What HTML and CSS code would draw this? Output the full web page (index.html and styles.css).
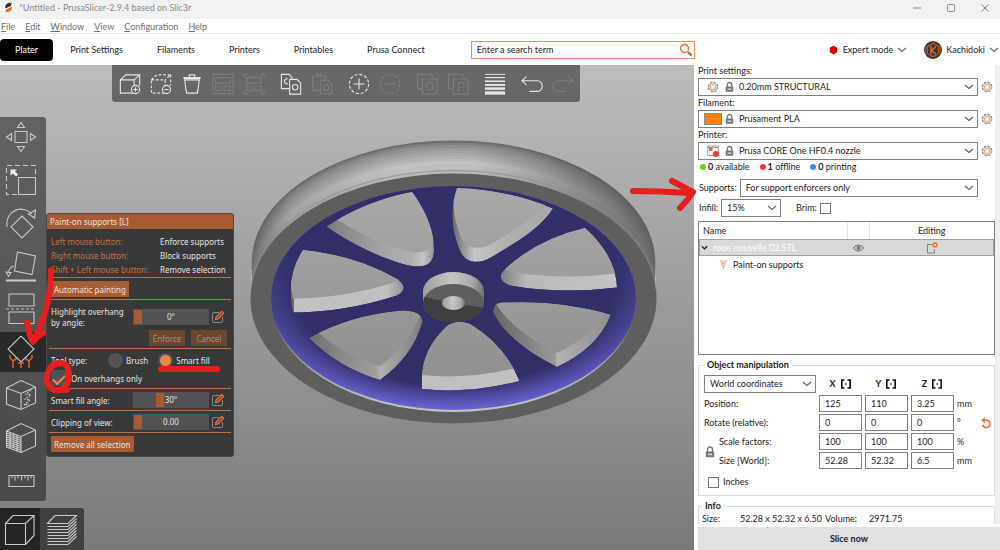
FILE: index.html
```html
<!DOCTYPE html>
<html lang="en">
<head>
<meta charset="utf-8">
<title>*Untitled - PrusaSlicer-2.9.4 based on Slic3r</title>
<link rel="stylesheet" href="styles.css">
</head>
<body>
<svg class="defs" width="0" height="0" aria-hidden="true">
  <symbol id="chev" viewBox="0 0 10 6"><path d="M1 1l4 3.4L9 1" fill="none" stroke="#666" stroke-width="1.3"/></symbol>
  <symbol id="gear" viewBox="0 0 12 12"><circle cx="6" cy="6" r="4.9" fill="none" stroke="#999" stroke-width="1.2" stroke-dasharray="2.2 1.650"/><circle cx="6" cy="6" r="4.2" fill="#fff" stroke="#888" stroke-width=".8"/><circle cx="6" cy="6" r="2.5" fill="none" stroke="#f0a57f" stroke-width="1.200"/></symbol>
  <symbol id="lock" viewBox="0 0 10 12"><path d="M2.5 6V3.5a2.5 2.500 0 0 1 5 0V6" fill="none" stroke="#777" stroke-width="1.4"/><rect x=".8" y="5.4" width="8.4" height="5.8" rx=".8" fill="#777"/><rect x="3" y="7.6" width="4" height="1.6" fill="#ddd"/></symbol>
  <symbol id="mirror" viewBox="0 0 12 10"><path d="M4.500 1H1.800v8H4.500M7.500 1h2.700v8H7.500" fill="none" stroke="#111" stroke-width="1.600"/><path d="M6 4v2" stroke="#111" stroke-width="1"/></symbol>
  <symbol id="edit" viewBox="0 0 14 14"><path d="M8 2.500H3a1.500 1.500 0 0 0-1.500 1.500v7A1.500 1.500 0 0 0 3 12.500h7a1.500 1.500 0 0 0 1.500-1.500V7" fill="none" stroke="#8a8a8a" stroke-width="1"/><path d="M4.500 9.500l.6-2.700L10.700 1.300l2 2L7.200 8.900z" fill="#8a4a28" stroke="#e07038" stroke-width="1.200"/></symbol>
</svg>

<div class="app">
  <header class="titlebar">
    <svg class="logo" viewBox="0 0 12 12"><circle cx="6" cy="6" r="6" fill="#fff"/><path d="M2.500 7C1.800 2.500 5 .4 9.500 1L8.700 4.300z" fill="#333"/><path d="M9.800 4.800C10.500 8.500 7.500 11.700 2.500 11L3.200 8.200z" fill="#ed6b21"/></svg>
    <span class="title">*Untitled - PrusaSlicer-2.9.4 based on Slic3r</span>
    <div class="winbtns">
      <button aria-label="Minimize"><svg viewBox="0 0 8 8"><path d="M0 4h8"/></svg></button>
      <button aria-label="Maximize"><svg viewBox="0 0 8 8"><rect x=".5" y=".5" width="7" height="7" rx="1"/></svg></button>
      <button aria-label="Close"><svg viewBox="0 0 8 8"><path d="M.5.5l7 7M7.500.5l-7 7"/></svg></button>
    </div>
  </header>
  <nav class="menubar">
    <button><u>F</u>ile</button><button><u>E</u>dit</button><button><u>W</u>indow</button><button><u>V</u>iew</button><button><u>C</u>onfiguration</button><button><u>H</u>elp</button>
  </nav>
  <nav class="tabs">
    <button class="tab active">Plater</button>
    <button class="tab">Print Settings</button>
    <button class="tab">Filaments</button>
    <button class="tab">Printers</button>
    <button class="tab">Printables</button>
    <button class="tab">Prusa Connect</button>
    <label class="search">
      <input type="text" aria-label="Search" value="Enter a search term">
      <svg viewBox="0 0 14 14"><circle cx="5.500" cy="5.500" r="4" fill="none" stroke="#ed6b21" stroke-width="1.300"/><path d="M9 9l3.500 3.500" stroke="#777" stroke-width="2.400"/></svg>
    </label>
    <div class="account">
      <button class="mode"><svg class="hex" viewBox="0 0 10 12"><path d="M5 .5l4.500 2.700v5.600L5 11.500.5 8.800V3.200z" fill="#e70000"/></svg>Expert mode<svg class="chev"><use href="#chev"/></svg></button>
      <button class="user"><svg class="avatar" viewBox="0 0 18 18"><circle cx="9" cy="9" r="9" fill="#3a3432"/><path d="M9 2.200l5.800 3.400v6.800L9 15.800l-5.800-3.400V5.600z" fill="none" stroke="#c95a26" stroke-width="1.200"/><path d="M7 5v8M12 5.500L7.500 9.300 11.800 13" fill="none" stroke="#e0662c" stroke-width="1.600"/><path d="M1.500 5v8M16.500 5v8" stroke="#a34a22" stroke-width="1"/></svg>Kachidoki<svg class="chev"><use href="#chev"/></svg></button>
    </div>
  </nav>

  <div class="main">
    <main class="viewport">
      <svg class="scene" viewBox="0 65 694 485" preserveAspectRatio="xMidYMid slice" role="img" aria-label="Wheel model">
        <defs>
          <linearGradient id="bg" gradientUnits="userSpaceOnUse" x1="0" y1="65" x2="0" y2="550"><stop offset="0" stop-color="#bcbcbc"/><stop offset="1" stop-color="#7a7a7a"/></linearGradient>
          <linearGradient id="side" gradientUnits="userSpaceOnUse" x1="250" y1="0" x2="657" y2="0"><stop offset="0" stop-color="#555" stop-opacity=".75"/><stop offset=".1" stop-color="#606060" stop-opacity=".3"/><stop offset=".35" stop-color="#666" stop-opacity="0"/><stop offset=".55" stop-color="#666" stop-opacity="0"/><stop offset=".8" stop-color="#5a5a5a" stop-opacity=".5"/><stop offset="1" stop-color="#555" stop-opacity=".8"/></linearGradient>
          <radialGradient id="barrel" cx=".5" cy=".5" r=".5" fx=".5" fy=".09"><stop offset=".88" stop-color="#322f68"/><stop offset=".93" stop-color="#4d4a9e"/><stop offset="1" stop-color="#6965d8"/></radialGradient>
          <linearGradient id="shade" x1="0" y1="0" x2="0" y2="1"><stop offset=".3" stop-color="#322f68"/><stop offset=".6" stop-color="#322f68" stop-opacity=".62"/><stop offset="1" stop-color="#322f68" stop-opacity="0"/></linearGradient>
          <linearGradient id="lip" x1="0" y1="0" x2="0" y2="1"><stop offset=".6" stop-color="#5e5e5e"/><stop offset=".8" stop-color="#aaa"/><stop offset="1" stop-color="#c4c4c4"/></linearGradient>
          <linearGradient id="wUp"><stop offset="0" stop-color="#7c7c7c"/><stop offset=".5" stop-color="#a4a4a4"/><stop offset=".8" stop-color="#b0b0b0"/><stop offset=".9" stop-color="#c6c6c6"/><stop offset="1" stop-color="#949494"/></linearGradient>
          <linearGradient id="wUpR"><stop offset="0" stop-color="#686868"/><stop offset=".12" stop-color="#9a9a9a"/><stop offset=".22" stop-color="#c6c6c6"/><stop offset=".5" stop-color="#b2b2b2"/><stop offset="1" stop-color="#a6a6a6"/></linearGradient>
          <linearGradient id="wFlatR"><stop offset="0" stop-color="#7e7e7e"/><stop offset=".22" stop-color="#b8b8b8"/><stop offset="1" stop-color="#c4c4c4"/></linearGradient>
          <linearGradient id="wDnR"><stop offset="0" stop-color="#666"/><stop offset=".53" stop-color="#989898"/><stop offset=".54" stop-color="#b4b4b4"/><stop offset="1" stop-color="#8c8c8c"/></linearGradient>
          <linearGradient id="wDnL"><stop offset="0" stop-color="#707070"/><stop offset=".6" stop-color="#a0a0a0"/><stop offset=".63" stop-color="#b0b0b0"/><stop offset="1" stop-color="#7c7c7c"/></linearGradient>
          <linearGradient id="wFlatL"><stop offset="0" stop-color="#686868"/><stop offset=".03" stop-color="#686868"/><stop offset=".035" stop-color="#c2c2c2"/><stop offset=".85" stop-color="#c0c0c0"/><stop offset="1" stop-color="#909090"/></linearGradient>
          <linearGradient id="hub"><stop offset="0" stop-color="#9c9c9c"/><stop offset=".45" stop-color="#c6c6c6"/><stop offset=".8" stop-color="#aaa"/><stop offset="1" stop-color="#707070"/></linearGradient>
          <path id="hA" d="M326.500 226.500Q365 201 412 192Q434 222 434 250C434 262 428 266.500 417 266.500C400 266 358 249 326.500 226.500Z"/>
          <path id="hB" d="M457 188Q510 190 553 208.500C540 229 514 244 490 258C477 265 466 262 461 253Q446 221 457 188Z"/>
          <path id="hC" d="M585 228Q616 256 617 287.500Q560 294.500 510 285.500C500 282 498 276 504 270Q537 239 585 228Z"/>
          <path id="hD" d="M493 312C494 303 498 302.500 505 302.500Q560 300 611 314.500Q598 348 557 367Q507 342 493 312Z"/>
          <path id="hE" d="M422 389C420 362 429 343 447 326Q457 319 470 324Q505 345 519.500 381Q470 394 422 389Z"/>
          <path id="hF" d="M309 338Q351 315 400 311C414 310 424 315 422 323Q413 356 380 380Q339 368 309 338Z"/>
          <path id="hG" d="M303 250Q355 255 397 279C406 285 406 291 397 295.500Q346 312 293 312.500Q285 278 303 250Z"/>
          <clipPath id="cA"><use href="#hA"/></clipPath><clipPath id="cB"><use href="#hB"/></clipPath><clipPath id="cC"><use href="#hC"/></clipPath><clipPath id="cD"><use href="#hD"/></clipPath><clipPath id="cE"><use href="#hE"/></clipPath><clipPath id="cF"><use href="#hF"/></clipPath><clipPath id="cG"><use href="#hG"/></clipPath>
          <clipPath id="cFace"><ellipse cx="453.500" cy="303" rx="30.500" ry="19"/></clipPath>
        </defs>
        <rect x="-1000" y="-500" width="3000" height="2000" fill="url(#bg)"/>
        <g>
          <ellipse cx="453.500" cy="262" rx="201.500" ry="121.500" fill="#6e6e6e"/>
          <ellipse cx="453.500" cy="264.500" rx="202" ry="122" fill="#808080"/>
          <ellipse cx="453.500" cy="267" rx="202" ry="122" fill="#8f8f8f"/>
          <ellipse cx="453.500" cy="270" rx="202" ry="122" fill="#999"/>
          <ellipse cx="453.500" cy="273" rx="202" ry="122.500" fill="#a2a2a2"/>
          <ellipse cx="453.500" cy="276" rx="202" ry="123" fill="#aaa"/>
          <ellipse cx="453.500" cy="279" rx="202" ry="123" fill="#b2b2b2"/>
          <ellipse cx="453.500" cy="282" rx="202" ry="123" fill="#bababa"/>
          <ellipse cx="453.500" cy="285" rx="202" ry="124" fill="#c3c3c3"/>
          <ellipse cx="453.500" cy="289" rx="202" ry="124" fill="#bfbfbf"/>
          <ellipse cx="453.500" cy="293" rx="202" ry="124" fill="#b9b9b9"/>
          <path d="M252 262a201.500 121.500 0 0 1 403 0v36h-403z" fill="url(#side)"/>
        </g>
        <ellipse cx="453.500" cy="298.500" rx="203" ry="125" fill="#5e5e5e"/>
        <path d="M250.700 290A203 125 0 0 1 656.300 290" fill="none" stroke="#8f8f8f" stroke-width=".8"/>
        <ellipse cx="453.500" cy="299" rx="183" ry="113" fill="url(#lip)"/>
        <ellipse cx="453.500" cy="298" rx="182.500" ry="112" fill="url(#barrel)"/>
        <ellipse cx="453.500" cy="298" rx="182.500" ry="112" fill="url(#shade)"/>
        <g clip-path="url(#cA)"><use href="#hA" fill="url(#wUp)"/><use href="#hA" y="-14" fill="url(#bg)"/></g>
        <g clip-path="url(#cB)"><use href="#hB" fill="url(#wUpR)"/><use href="#hB" x="1" y="-14" fill="url(#bg)"/></g>
        <g clip-path="url(#cC)"><use href="#hC" fill="url(#wFlatR)"/><use href="#hC" y="-14" fill="url(#bg)"/></g>
        <g clip-path="url(#cD)"><use href="#hD" fill="url(#wDnR)"/><use href="#hD" y="-14" fill="url(#bg)"/></g>
        <g clip-path="url(#cE)"><use href="#hE" fill="#c0c0c0"/><use href="#hE" y="-14" fill="url(#bg)"/></g>
        <g clip-path="url(#cF)"><use href="#hF" fill="url(#wDnL)"/><use href="#hF" y="-14" fill="url(#bg)"/></g>
        <g clip-path="url(#cG)"><use href="#hG" fill="url(#wFlatL)"/><use href="#hG" y="-14" fill="url(#bg)"/></g>
        <path d="M423 291a30.500 19 0 0 1 61 0v12h-61z" fill="url(#hub)"/>
        <ellipse cx="453.500" cy="303" rx="30.500" ry="19" fill="#5e5e5e"/>
        <path clip-path="url(#cFace)" d="M420 296L453 303 486 308V325H420z" fill="#3f3f3f"/>
        <ellipse cx="453.500" cy="303" rx="11.500" ry="7" fill="url(#hub)"/>
      </svg>

      <div class="toolbar">
        <div class="group">
          <button aria-label="Add"><svg viewBox="0 0 24 24"><path d="M1.500 7.500h15V22h-15zM1.500 7.500L7.500 2h15l-6 5.500M22.500 2v12"/><circle cx="18" cy="18" r="4.500" class="solid"/><path d="M15.500 18h5M18 15.500v5"/></svg></button>
          <button aria-label="Delete"><svg viewBox="0 0 24 24"><path d="M1.500 7.500h15V22h-15zM1.500 7.500L7.500 2h15l-6 5.500M22.500 2v12" stroke-dasharray="3 2"/><circle cx="18" cy="18" r="4.500" class="solid"/><path d="M15.500 18h5"/></svg></button>
          <button aria-label="Delete all"><svg viewBox="0 0 24 24"><path d="M2.500 5h19M4 7.500l2 14.500h12l2-14.500zM9 4.500V2h6v2.500"/><path d="M3 6h18" /></svg></button>
          <button aria-label="Arrange" disabled><svg viewBox="0 0 24 24"><path d="M1 1.500h22v21H1zM4 5h16v6H4zM4 14.500h6v5H4zM13 14.500h7v5h-7z"/></svg></button>
          <button aria-label="Arrange selection" disabled><svg viewBox="0 0 24 24"><path d="M1 5V1.500h4M19 1.500h4V5M23 19v3.500h-4M5 22.500H1V19M4 5h16v6H4zM4 14.500h6v5H4zM13 14.500h7v5h-7z"/></svg></button>
        </div>
        <div class="group">
          <button aria-label="Copy"><svg viewBox="0 0 24 24"><path d="M10 17H1.500V1.500H10L13 4.500V6"/><path d="M8.500 6.500a2.700 2.700 0 1 0 0 5"/><path d="M10.500 7h8l4 4v12h-12z" class="solid"/><circle cx="16.500" cy="15.500" r="3"/></svg></button>
          <button aria-label="Paste" disabled><svg viewBox="0 0 24 24"><path d="M10 19H2V3.500h14V7M6 3.500V1.500h6v2M10.500 8h8l4 4v10.500h-12z"/><circle cx="16.500" cy="16" r="3"/></svg></button>
        </div>
        <div class="group">
          <button aria-label="Add instance"><svg viewBox="0 0 24 24"><circle cx="12" cy="12" r="10.500" stroke-dasharray="3.500 2"/><path d="M6 12h12M12 6v12"/></svg></button>
          <button aria-label="Remove instance" disabled><svg viewBox="0 0 24 24"><circle cx="12" cy="12" r="10.500" stroke-dasharray="3.500 2"/><path d="M6 12h12"/></svg></button>
        </div>
        <div class="group">
          <button aria-label="Split to objects" disabled><svg viewBox="0 0 24 24"><path d="M7 17H1.500V1.500h16V6M7 6.500h16V23H7zM13 10.500h4l1 1v6l-1 1h-4l-1-1v-6z"/></svg></button>
          <button aria-label="Split to parts" disabled><svg viewBox="0 0 24 24"><path d="M7 17H1.500V1.500h16V6M7 6.500h16V23H7zM12.500 19.500v-9H17l1.500 1.500v2L17 15.500h-4.500"/></svg></button>
        </div>
        <div class="group">
          <button aria-label="Variable layer height"><svg viewBox="0 0 24 24"><path d="M1 1.500h22" stroke-width="1"/><path d="M1 5h22" stroke-width="1.300"/><path d="M1 9h22" stroke-width="1.800"/><path d="M1 13h22" stroke-width="2.200"/><path d="M1 17h22" stroke-width="2.700"/><path d="M1 21.800h22" stroke-width="3.500"/></svg></button>
        </div>
        <div class="group">
          <button aria-label="Undo"><svg viewBox="0 0 24 24"><path d="M6 4L1 8.500 6 13M1.500 8.500H18a5 5.500 0 0 1 0 11.500H9"/></svg></button>
          <button aria-label="Redo" disabled><svg viewBox="0 0 24 24"><path d="M18 4l5 4.500L18 13M22.500 8.500H6A5 5.500 0 0 0 6 20h9"/></svg></button>
        </div>
      </div>

      <div class="gizmos">
        <button aria-label="Move"><svg viewBox="0 0 32 32"><path d="M10 10.500h12v11H10zM16 1.500l3.500 5h-7zM16 30.500l3.500-5h-7zM1.500 16l5-3.500v7zM30.500 16l-5-3.500v7z"/></svg></button>
        <button aria-label="Scale"><svg viewBox="0 0 32 32"><path d="M13.500 13.500h17v17h-17z"/><path d="M12 30.500H1.500v-29h29V12" stroke-dasharray="5 3"/><path d="M5.500 5.500h6.500l-2 2 3 3-2 2-3-3-2.500 2z" fill="#eee" stroke="none"/></svg></button>
        <button aria-label="Rotate"><svg viewBox="0 0 32 32"><path d="M17 9l11 11-11 11L6 20zM2 20C0 3 18-3 27 7M30.500 3l-1 8-6-4z"/></svg></button>
        <button aria-label="Place on face"><svg viewBox="0 0 32 32"><path d="M12.500 2L30.500 6 27 24.500 9.500 21zM9 16Q4 17 3.500 23M1 22l5 .5-2.500 4z"/><path d="M1 30.500h30" stroke-width="2"/></svg></button>
        <button aria-label="Cut"><svg viewBox="0 0 32 32"><path d="M4 1h25v12H4zM4 19h25v11.500H4z"/><path d="M1 16h30" stroke-dasharray="3 2"/></svg></button>
        <button aria-label="Paint-on supports" class="on"><svg viewBox="0 0 32 32"><path d="M8 32v-7l-3-3v-3M8 25l3-2v-3M16 32v-5M13 27h6M24 32v-7l-3-2v-3M24 25l3-3v-3" class="orange"/><path d="M16 0l13 13-13 13L3 13z" class="face"/></svg></button>
        <button aria-label="Seam painting"><svg viewBox="0 0 32 32"><path d="M1.500 9L16 1.500 30.500 8v16L16 30.500 1.500 25zM1.500 9L16 14.500 30.500 8M16 14.500v16"/><path d="M26 11l-5 4 5 1-6 4 5 1-6 5 5-1" stroke-dasharray="2 1"/></svg></button>
        <button aria-label="Multimaterial painting"><svg viewBox="0 0 32 32"><path d="M1.500 9L16 1.500 30.500 8v16L16 30.500 1.500 25zM1.500 9L16 14.500 30.500 8M16 14.500v16M1.500 11l14.500 5.500M1.500 13L16 18.500M1.500 15L16 20.500M1.500 17L16 22.500M1.500 19L16 24.500M1.500 21L16 26.500M1.500 23L16 28.500M5 10v16M8.500 11.500v16M12 13v16"/></svg></button>
        <button aria-label="Measure"><svg viewBox="0 0 32 32"><path d="M4 10.500h25v11H4zM7 10.500v3M10 10.500v5M13 10.500v3M16.500 10.500v5M20 10.500v3M23 10.500v5M26 10.500v3"/></svg></button>
      </div>

      <div class="views">
        <button aria-label="3D editor view" class="on"><svg viewBox="0 0 32 32"><path d="M1.500 9.500h20v21h-20zM1.500 9.500L9 1.500h21l-8.500 8M30 1.500v20l-8.500 9"/></svg></button>
        <button aria-label="Preview"><svg viewBox="0 0 32 32"><path d="M1.500 9.500L9 1.500h21.500l-8.500 8zM1.500 12.500H22l8.500-8M1.500 15.500H22l8.500-8M1.500 18.500H22l8.500-8M1.500 21.500H22l8.500-8M1.500 24.500H22l8.500-8M1.500 27.500H22l8.500-8M1.500 30.500H22l8.500-8"/></svg></button>
      </div>

      <section class="panel">
        <h2>Paint-on supports [L]</h2>
        <div class="pbody">
          <dl class="keys">
            <dt>Left mouse button:</dt><dd>Enforce supports</dd>
            <dt>Right mouse button:</dt><dd>Block supports</dd>
            <dt>Shift + Left mouse button:</dt><dd>Remove selection</dd>
          </dl>
          <div class="sect"><button class="pbtn">Automatic painting</button></div>
          <div class="sect">
            <div class="prow tall"><label for="hl">Highlight overhang by angle:</label><span class="slider"><input id="hl" type="range" min="0" max="90" value="0"><output>0°</output></span><button class="edit" aria-label="Edit angle"><svg><use href="#edit"/></svg></button></div>
            <div class="actions"><button class="pbtn" disabled>Enforce</button><button class="pbtn" disabled>Cancel</button></div>
          </div>
          <div class="sect stack">
            <div class="tools"><span>Tool type:</span><label><input type="radio" name="tool">Brush</label><label><input type="radio" name="tool" checked>Smart fill</label></div>
            <label class="over"><input type="checkbox" checked>On overhangs only</label>
          </div>
          <div class="sect"><div class="prow"><label for="sf">Smart fill angle:</label><span class="slider"><input id="sf" type="range" min="0" max="90" value="30"><output>30°</output></span><button class="edit" aria-label="Edit fill angle"><svg><use href="#edit"/></svg></button></div></div>
          <div class="sect"><div class="prow"><label for="cv">Clipping of view:</label><span class="slider"><input id="cv" type="range" min="0" max="1" step=".01" value="0"><output>0.00</output></span><button class="edit" aria-label="Edit clipping"><svg><use href="#edit"/></svg></button></div></div>
          <div class="sect"><button class="pbtn">Remove all selection</button></div>
        </div>
      </section>

      <svg class="marks left" viewBox="0 65 240 485" aria-hidden="true"><path d="M51 270C51 296 46 314 34 341M27 322Q29 335 33 342Q37 336 43 333"/><path d="M58 363C45 365 43 386 54 390C63 392 70 384 69 373C68 362 60 361 51 367M56 390L67 390"/><path d="M161 369H217"/></svg>
      <svg class="marks right" viewBox="624 65 70 485" aria-hidden="true"><path d="M633 191Q660 191 688 193M672 181L693 192Q688 200 680 208"/></svg>
    </main>

    <aside class="sidebar">
      <div class="scroll">
        <div class="presets">
          <label for="ps">Print settings:</label>
          <div class="line"><div class="combo two"><select id="ps"><option>0.20mm STRUCTURAL</option></select><span class="icons"><svg class="i12"><use href="#gear"/></svg><svg class="lk"><use href="#lock"/></svg></span><svg class="chev"><use href="#chev"/></svg></div><button class="cog" aria-label="Edit print settings"><svg><use href="#gear"/></svg></button></div>
          <label for="fl">Filament:</label>
          <div class="line"><div class="combo two"><select id="fl"><option>Prusament PLA</option></select><span class="icons"><i class="swatch"></i><svg class="lk"><use href="#lock"/></svg></span><svg class="chev"><use href="#chev"/></svg></div><button class="cog" aria-label="Edit filament"><svg><use href="#gear"/></svg></button></div>
          <label for="pr">Printer:</label>
          <div class="line"><div class="combo two"><select id="pr"><option>Prusa CORE One HF0.4 nozzle</option></select><span class="icons"><svg class="i12" viewBox="0 0 12 12"><path d="M.7 1h10.600v9.500H.7zM.7 2.500h10.600" fill="none" stroke="#999" stroke-width="1"/><rect x="2" y="3" width="3.500" height="3" fill="#ed6b21"/><circle cx="8.800" cy="9" r="3" fill="#f33"/></svg><svg class="lk"><use href="#lock"/></svg></span><svg class="chev"><use href="#chev"/></svg></div><button class="cog" aria-label="Edit printer"><svg><use href="#gear"/></svg></button></div>
        </div>
        <div class="status"><span><i class="dot green"></i><b>0</b> available</span><span><i class="dot red"></i><b>1</b> offline</span><span><i class="dot blue"></i><b>0</b> printing</span></div>
        <div class="line supports"><label for="su">Supports:</label><div class="combo"><select id="su"><option>For support enforcers only</option></select><svg class="chev"><use href="#chev"/></svg></div></div>
        <div class="line infill"><label for="inf">Infill:</label><div class="combo small"><select id="inf"><option>15%</option></select><svg class="chev"><use href="#chev"/></svg></div><label for="brim" class="brim">Brim:</label><input id="brim" type="checkbox" class="box"></div>
        <div class="tree">
          <table>
            <colgroup><col><col class="c2"><col class="c3"></colgroup>
            <thead><tr><th>Name</th><th></th><th>Editing</th></tr></thead>
            <tbody>
              <tr class="sel"><td><span class="cell"><svg class="arrow" viewBox="0 0 8 6"><path d="M1 1l3 3 3-3" fill="none" stroke="#222" stroke-width="1.500"/></svg>roue nouvelle 02.STL</span></td><td><svg class="eye" viewBox="0 0 12 8"><path d="M.5 4Q6-2.500 11.500 4Q6 10.500.5 4z" fill="none" stroke="#777" stroke-width="1.200"/><circle cx="6" cy="4" r="2.200" fill="#777"/></svg></td><td><svg class="ed" viewBox="0 0 12 12"><path d="M6 2.500H1.500v8.500h7V7" fill="none" stroke="#777" stroke-width=".9"/><circle cx="9" cy="3" r="2" fill="none" stroke="#ed6b21" stroke-width="1.400"/></svg></td></tr>
              <tr><td><span class="cell child"><svg class="pos" viewBox="0 0 10 12"><path d="M1 1l2 3h4l2-3M3 5l2 5.500L7 5z" fill="#fbd9c8" stroke="#e9a58a" stroke-width="1"/></svg>Paint-on supports</span></td><td></td><td></td></tr>
            </tbody>
          </table>
        </div>
        <fieldset class="manip">
          <legend>Object manipulation</legend>
          <div class="grid">
            <div class="combo world"><select aria-label="Coordinate system"><option>World coordinates</option></select><svg class="chev"><use href="#chev"/></svg></div>
            <b class="axis">X <svg><use href="#mirror"/></svg></b><b class="axis">Y <svg><use href="#mirror"/></svg></b><b class="axis">Z <svg><use href="#mirror"/></svg></b><span></span><span></span>
            <span>Position:</span><input type="text" aria-label="Position X" value="125"><input type="text" aria-label="Position Y" value="110"><input type="text" aria-label="Position Z" value="3.25"><span>mm</span><span></span>
            <span>Rotate (relative):</span><input type="text" aria-label="Rotate X" value="0"><input type="text" aria-label="Rotate Y" value="0"><input type="text" aria-label="Rotate Z" value="0"><span>°</span><button class="reset" aria-label="Reset rotation"><svg viewBox="0 0 12 12"><path d="M3 3.200h3.500a3.700 3.700 0 1 1-3.800 4.600" fill="none" stroke="#ed6b21" stroke-width="1.500"/><path d="M4.800 0L1.300 3.200l3.500 3z" fill="#ed6b21"/></svg></button>
            <span class="sub">Scale factors:</span><input type="text" aria-label="Scale X" value="100"><input type="text" aria-label="Scale Y" value="100"><input type="text" aria-label="Scale Z" value="100"><span>%</span><span></span>
            <span class="sub">Size [World]:</span><input type="text" aria-label="Size X" value="52.28"><input type="text" aria-label="Size Y" value="52.32"><input type="text" aria-label="Size Z" value="6.5"><span>mm</span><span></span>
            <button class="uniform" aria-label="Lock proportions"><svg><use href="#lock"/></svg></button>
          </div>
          <label class="inches"><input type="checkbox" class="box">Inches</label>
        </fieldset>
        <fieldset class="info">
          <legend>Info</legend>
          <div class="facts"><span>Size:</span><span>52.28 x 52.32 x 6.50</span><span>Volume:</span><span>2971.75</span></div>
        </fieldset>
      </div>
      <button class="slice">Slice now</button>
    </aside>
  </div>
</div>
</body>
</html>
```
FILE: styles.css
```css
* { box-sizing: border-box; }
body { margin: 0; font: 9px/12px Lato, "Noto Sans", sans-serif; color: #1c1c1c; background: #fff; }
button, input, select { font: inherit; color: inherit; margin: 0; }
button { border: 0; background: none; padding: 0; }
svg { display: block; flex: none; }
.defs { position: absolute; }
.app { height: 100vh; min-height: 550px; display: flex; flex-direction: column; }
.chev { width: 10px; height: 6px; }

.titlebar { height: 19px; background: #f2f2f2; color: #8c8c8c; display: flex; align-items: center; padding: 0 11px 4px 3px; }
.logo { width: 11px; height: 11px; margin-right: 5px; }
.winbtns { margin-left: auto; display: flex; gap: 26px; }
.winbtns svg { width: 8px; height: 8px; fill: none; stroke: #8a8a8a; }
.menubar { height: 15px; display: flex; gap: 10px; padding: 1px 1px 0; color: #6e6e6e; border-bottom: 1px solid #eaeaea; }

.tabs { height: 31px; display: flex; align-items: center; }
.tab { padding: 0 17px; height: 22px; white-space: nowrap; }
.tab.active { background: #000; color: #fff; border-radius: 4px; padding: 0 15px; }
.search { flex: 1 1 224px; max-width: 224px; margin-left: 29px; height: 18px; border: 1px solid #ed8b5a; display: flex; align-items: center; padding: 0 1px 0 5px; }
.search input { flex: 1; min-width: 0; border: 0; outline: 0; padding: 0; background: none; }
.search svg { width: 14px; height: 14px; }
.account { margin-left: auto; display: flex; gap: 17px; padding-right: 1px; }
.account button { display: flex; align-items: center; }
.hex { width: 9px; height: 10px; margin-right: 5px; }
.avatar { width: 18px; height: 18px; margin-right: 4px; }
.account .chev { margin-left: 4px; }

.main { flex: 1; min-height: 0; display: flex; }
.viewport { flex: 1; min-width: 0; position: relative; background: #999; z-index: 1; }
.scene { position: absolute; inset: 0; width: 100%; height: 100%; }

.toolbar { position: absolute; top: 0; left: 112px; height: 37px; display: flex; gap: 6px; padding: 0 2px; background: rgba(88, 88, 88, .85); border-radius: 0 0 3px 3px; }
.group { display: flex; }
.toolbar button { width: 31px; display: grid; place-items: center; }
.toolbar svg { width: 22px; height: 22px; fill: none; stroke: #e6e6e6; stroke-width: 1.2; }
.toolbar .solid { fill: #666; }
.toolbar button:disabled { opacity: .17; }

.gizmos { position: absolute; top: 52px; left: 0; width: 46px; display: flex; flex-direction: column; gap: 3px; background: linear-gradient(#626262, #484848); border-radius: 0 3px 3px 0; }
.gizmos button { height: 40px; padding-left: 5px; }
.gizmos svg, .views svg { width: 32px; height: 32px; fill: none; stroke: #c8c8c8; stroke-width: 1.1; }
.gizmos .on { background: #292929; }
.gizmos .orange { stroke: #d0622a; stroke-width: 1.6; }
.gizmos .face { fill: #292929; }
.views { position: absolute; left: 0; bottom: 0; height: 42px; display: flex; background: #404040; border-radius: 0 3px 0 0; overflow: hidden; }
.views button { width: 44px; padding: 2px 5px 0 6px; }
.views .on { width: 40px; padding: 2px 4px 0; background: #242424; }

.panel { position: absolute; left: 46px; top: 148px; width: 188px; background: #383838; color: #e4e4e4; border: 1px solid #484848; border-radius: 3px; overflow: hidden; font: 8px/11px "Noto Sans", sans-serif; }
.panel h2 { margin: 0; padding: 0 3px; font-size: 8px; font-weight: 400; line-height: 15px; background: #a85a30; }
.pbody { padding: 6px 2px 2px; }
.keys { margin: 0; padding: 0 2px; display: grid; grid-template-columns: 109px 1fr; line-height: 14px; }
.keys dt { color: #c4703f; white-space: nowrap; }
.keys dd { margin: 0; white-space: nowrap; }
.sect { border-top: 1px solid #c07040; padding: 3px 2px 2px; }
.pbtn { height: 16px; padding: 0 3px; background: #a85a30; display: block; }
.pbtn:disabled { background: #6b4631; color: #a08f86; }
.prow { display: grid; grid-template-columns: 80px 76px 12px; column-gap: 2px; align-items: center; min-height: 16px; }
.tall { padding-top: 3px; }
.slider { position: relative; display: block; height: 16px; }
.slider input { appearance: none; width: 100%; height: 16px; background: #525252; padding: 0 1px; display: block; }
.slider input::-webkit-slider-thumb { appearance: none; width: 8px; height: 14px; background: #a85a30; }
.slider output { position: absolute; inset: 0; text-align: center; line-height: 16px; pointer-events: none; }
.edit svg { width: 14px; height: 14px; }
.actions { display: flex; justify-content: flex-end; gap: 6px; padding: 2px 2px 0 0; }
.actions .pbtn { width: 36px; }
.stack { display: flex; flex-direction: column; gap: 1px; }
.tools { display: flex; align-items: center; height: 17px; }
.tools span { width: 57px; }
.tools label { display: flex; align-items: center; gap: 3px; margin-right: 10px; }
.panel input[type=radio] { appearance: none; width: 15px; height: 15px; border-radius: 50%; background: #525252; }
.panel input[type=radio]:checked { background: radial-gradient(circle, #f0854a 5px, #525252 6px); }
.over { display: flex; align-items: center; gap: 4px; }
.over input { appearance: none; width: 16px; height: 16px; background: #525252; display: grid; place-items: center; }
.over input::after { content: ""; width: 10px; height: 5px; border: solid #f0854a; border-width: 0 0 2px 2px; transform: rotate(-45deg); }

.marks { position: absolute; top: 0; height: 485px; pointer-events: none; overflow: visible; fill: none; stroke: #e61e1e; stroke-width: 6; stroke-linecap: round; stroke-linejoin: round; }
.marks.left { left: 0; width: 240px; }
.marks.right { right: 0; width: 70px; }

.sidebar { flex: 0 0 306px; width: 306px; min-width: 0; display: flex; flex-direction: column; background: #fff; padding-left: 4px; }
.scroll { flex: 1; min-width: 0; min-height: 0; overflow: hidden; border-right: 5px solid #f0f0f0; }
.presets > label { display: block; height: 13px; }
.line { display: flex; align-items: center; }
.presets .line { margin-bottom: 1px; }
.combo { position: relative; flex: 1; height: 18px; }
.combo select { appearance: none; width: 100%; height: 18px; border: 1px solid #808080; border-radius: 0; background: #fff; padding: 0 5px; display: block; }
.combo.two select { padding-left: 40px; }
.combo .chev { position: absolute; right: 4px; top: 6px; pointer-events: none; }
.icons { position: absolute; left: 5px; right: auto; top: 3px; width: 31px; display: flex; justify-content: flex-end; align-items: center; gap: 6px; pointer-events: none; }
.i12 { width: 12px; height: 12px; }
.lk { width: 9px; height: 12px; }
.swatch { width: 18px; height: 12px; background: #ff8000; border: 1px solid #8a8a8a; margin-right: -3px; }
.cog { width: 17px; display: grid; place-items: center; }
.cog svg { width: 12px; height: 12px; }
.status { display: flex; gap: 10px; height: 15px; padding-left: 2px; line-height: 12px; }
.dot { display: inline-block; width: 6px; height: 6px; border-radius: 50%; margin-right: 2px; }
.green { background: #5fd60a; } .red { background: #f33; } .blue { background: #2f96f5; }
.supports { padding: 3px 17px 0 1px; gap: 3px; }
.infill { padding: 2px 0 4px 1px; }
.infill > label:first-child { width: 22px; }
.combo.small { flex: 0 0 60px; }
.brim { margin-left: 15px; }
.box { appearance: none; width: 11px; height: 11px; border: 1px solid #777; background: #fff; margin-left: 3px; }
.tree { height: 134px; border: 1px solid #808080; }
.tree table { width: 100%; border-collapse: collapse; table-layout: fixed; }
.c2 { width: 22px; } .c3 { width: 125px; }
.tree th { font-weight: 400; height: 17px; padding: 0; border-left: 1px solid #e4e4e4; }
.tree th:first-child { text-align: left; padding-left: 4px; border: 0; }
.tree td { height: 17px; padding: 0; }
.sel td { background: #d9d9d9; color: #fff; }
.sel { outline: 1px solid #a0a0a0; outline-offset: -1px; }
.cell { display: flex; align-items: center; gap: 5px; padding-left: 2px; }
.cell.child { padding-left: 20px; }
.arrow { width: 7px; height: 6px; }
.eye { width: 11px; height: 8px; margin: 0 auto; }
.ed { width: 12px; height: 12px; margin: 0 auto; }
.pos { width: 9px; height: 11px; }
fieldset { margin: 4px 0 0; border: 1px solid #dcdcdc; padding: 0 5px; min-width: 0; }
legend { font-weight: 700; padding: 0 3px; height: 12px; }
.grid { display: grid; grid-template-columns: 112px repeat(3, 43px) 20px 1fr; gap: 2px 3px; align-items: center; position: relative; margin-top: 4px; }
.world { flex: none; }
.axis { display: flex; justify-content: center; gap: 4px; align-items: center; }
.axis svg { width: 12px; height: 10px; }
.grid input { width: 100%; height: 17px; border: 1px solid #808080; padding: 0 5px; }
.sub { padding-left: 15px; }
.uniform { position: absolute; left: 1px; top: 71px; }
.uniform svg { width: 10px; height: 12px; }
.reset { width: 12px; }
.reset svg { width: 12px; height: 12px; }
.inches { display: flex; align-items: center; gap: 4px; padding: 7px 0 7px 1px; }
.info { padding: 1px 3px 0; }
.facts { display: grid; grid-template-columns: 38px 85px 44px 1fr; }
.slice { height: 23px; margin-top: 3px; background: #e1e1e1; font-weight: 700; }
```
